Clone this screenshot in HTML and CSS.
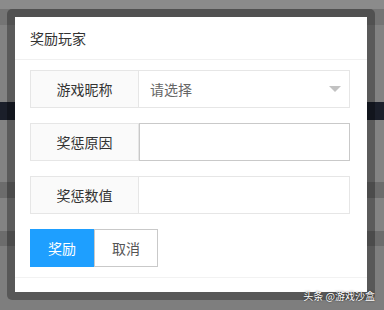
FILE: index.html
```html
<!DOCTYPE html>
<html lang="zh-CN">
<head>
<meta charset="utf-8">
<title>奖励玩家</title>
<link rel="stylesheet" href="styles.css">
</head>
<body>
<div class="backdrop">
  <div class="band b1"></div>
  <div class="band b2"></div>
  <div class="band b3"></div>
  <div class="band b4"></div>
  <div class="band b5"></div>
  <div class="band b6"></div>
  <div class="band b7"></div>
  <div class="band b8"></div>
  <div class="band b9"></div>
</div>
<div class="layer">
  <div class="title">奖励玩家</div>
  <div class="content">
    <div class="row">
      <div class="label">游戏昵称</div>
      <div class="field select">请选择<span class="edge"></span></div>
    </div>
    <div class="row">
      <div class="label">奖惩原因</div>
      <div class="field focus"></div>
    </div>
    <div class="row">
      <div class="label">奖惩数值</div>
      <div class="field"></div>
    </div>
    <div class="btns">
      <div class="btn primary">奖励</div>
      <div class="btn plain">取消</div>
    </div>
  </div>
  <div class="foot"></div>
</div>
<div class="watermark">头条 @游戏沙盒</div>
</body>
</html>
```
FILE: styles.css
```css
html, body {
  margin: 0;
  padding: 0;
  width: 384px;
  height: 310px;
  overflow: hidden;
  font-family: "Noto Sans CJK SC", "Noto Sans", sans-serif;
  font-size: 14px;
  color: #333;
}
.backdrop {
  display: flex;
  flex-direction: column;
  height: 310px;
}
.band { flex: none; }
.b1 { height: 9px; background: #8b8b8b; }
.b2 { height: 16px; background: #747474; }
.b3 { height: 77px; background: #828282; }
.b4 { height: 18px; background: #1b1f2a; }
.b5 { height: 62px; background: #838383; }
.b6 { height: 16px; background: #6c6c6c; }
.b7 { height: 33px; background: #838383; }
.b8 { height: 15px; background: #6c6c6c; }
.b9 { flex: 1; background: #7e7e7e; }

.layer {
  position: absolute;
  left: 7px;
  top: 9px;
  width: 352px;
  height: 275px;
  border: 8px solid rgba(0, 0, 0, 0.3);
  border-radius: 5px;
  background: #fff;
  background-clip: padding-box;
  display: flex;
  flex-direction: column;
}
.title {
  height: 42px;
  line-height: 42px;
  padding: 0 15px;
  border-bottom: 1px solid #f0f0f0;
  font-size: 14px;
  color: #333;
}
.content {
  padding: 10px 17px 10px 15px;
  display: flex;
  flex-direction: column;
  gap: 15px;
  border-bottom: 1px solid #f2f2f2;
}
.row {
  display: flex;
  height: 38px;
}
.label {
  width: 109px;
  box-sizing: border-box;
  border: 1px solid #e6e6e6;
  background: #fafafa;
  text-align: center;
  line-height: 36px;
  color: #333;
}
.field {
  flex: 1;
  position: relative;
  box-sizing: border-box;
  border: 1px solid #e6e6e6;
  border-left: none;
  padding-left: 11px;
  line-height: 36px;
  color: #666;
}
.field.focus {
  border: 1px solid #c9c9c9;
}
.edge {
  position: absolute;
  right: 8px;
  top: 15px;
  width: 0;
  height: 0;
  border-left: 6px solid transparent;
  border-right: 6px solid transparent;
  border-top: 6px solid #c2c2c2;
}
.btns {
  display: flex;
  height: 38px;
}
.btn {
  width: 64px;
  box-sizing: border-box;
  text-align: center;
  line-height: 36px;
  font-size: 14px;
}
.btn.primary {
  background: #1e9fff;
  border: 1px solid #1e9fff;
  color: #fff;
}
.btn.plain {
  background: #fff;
  border: 1px solid #c9c9c9;
  color: #555;
}
.foot {
  flex: 1;
}
.watermark {
  position: absolute;
  right: 9px;
  top: 290px;
  font-size: 10px;
  line-height: 12px;
  color: #fff;
  text-shadow: 0 0 2px rgba(0,0,0,0.7);
}
```
